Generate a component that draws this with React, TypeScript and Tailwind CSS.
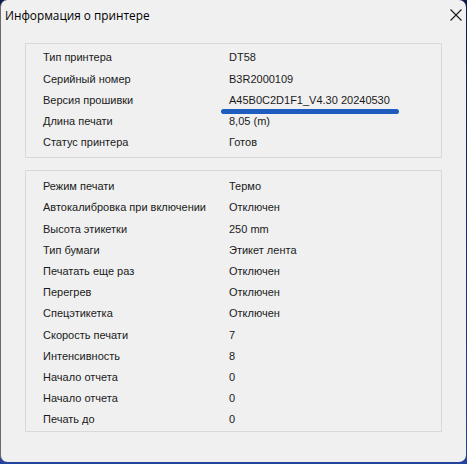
import React from 'react'

const general: [string, string][] = [
  ['Тип принтера', 'DT58'],
  ['Серийный номер', 'B3R2000109'],
  ['Версия прошивки', 'A45B0C2D1F1_V4.30 20240530'],
  ['Длина печати', '8,05 (m)'],
  ['Статус принтера', 'Готов'],
]

const settings: [string, string][] = [
  ['Режим печати', 'Термо'],
  ['Автокалибровка при включении', 'Отключен'],
  ['Высота этикетки', '250 mm'],
  ['Тип бумаги', 'Этикет лента'],
  ['Печатать еще раз', 'Отключен'],
  ['Перегрев', 'Отключен'],
  ['Спецэтикетка', 'Отключен'],
  ['Скорость печати', '7'],
  ['Интенсивность', '8'],
  ['Начало отчета', '0'],
  ['Начало отчета', '0'],
  ['Печать до', '0'],
]

function Row({ label, value, mark }: { label: string; value: string; mark?: boolean }) {
  return (
    <div className="flex items-center h-[21.2px] relative whitespace-nowrap">
      <span className="w-[203px] shrink-0 pl-[17px]">{label}</span>
      <span>{value}</span>
      {mark && (
        <div className="absolute left-[195px] top-[20px] w-[178px] h-[4.5px] rounded-full bg-[#1f5cbf]" />
      )}
    </div>
  )
}

export default function App() {
  return (
    <div className="w-[467px] h-[464px] bg-gradient-to-b from-[#0c1a4e] to-[#22449e] overflow-hidden">
      <div
        className="w-[466px] h-[462px] bg-[#f0f0f0] rounded-[7px] border-l border-[#6b6b6b] flex flex-col text-[11px] text-[#1a1a1a]"
        style={{ fontFamily: '"Liberation Sans", Arial, sans-serif' }}
      >
        {/* title bar */}
        <div className="h-[30px] flex items-center justify-between pl-[4px] pr-[3px] pt-[1px]">
          <span className="text-[11.8px] text-black" style={{ fontFamily: '"Open Sans", "Noto Sans", sans-serif' }}>
            Информация о принтере
          </span>
          <svg width="12" height="12" viewBox="0 0 12 12" className="mr-[1px] -mt-[2px]">
            <path d="M0.5 0.5L11.5 11.5M11.5 0.5L0.5 11.5" stroke="#1a1a1a" strokeWidth="1.1" />
          </svg>
        </div>

        <div className="pl-[24px] pt-[13px]">
          <div className="w-[417px] border border-[#d9d9d9] pt-[3px] pb-[4px]">
            {general.map(([l, v], i) => (
              <Row key={i} label={l} value={v} mark={i === 2} />
            ))}
          </div>

          <div className="w-[417px] mt-[12px] border border-[#d9d9d9] pt-[5px] pb-[1px]">
            {settings.map(([l, v], i) => (
              <Row key={i} label={l} value={v} />
            ))}
          </div>
        </div>
      </div>
    </div>
  )
}
